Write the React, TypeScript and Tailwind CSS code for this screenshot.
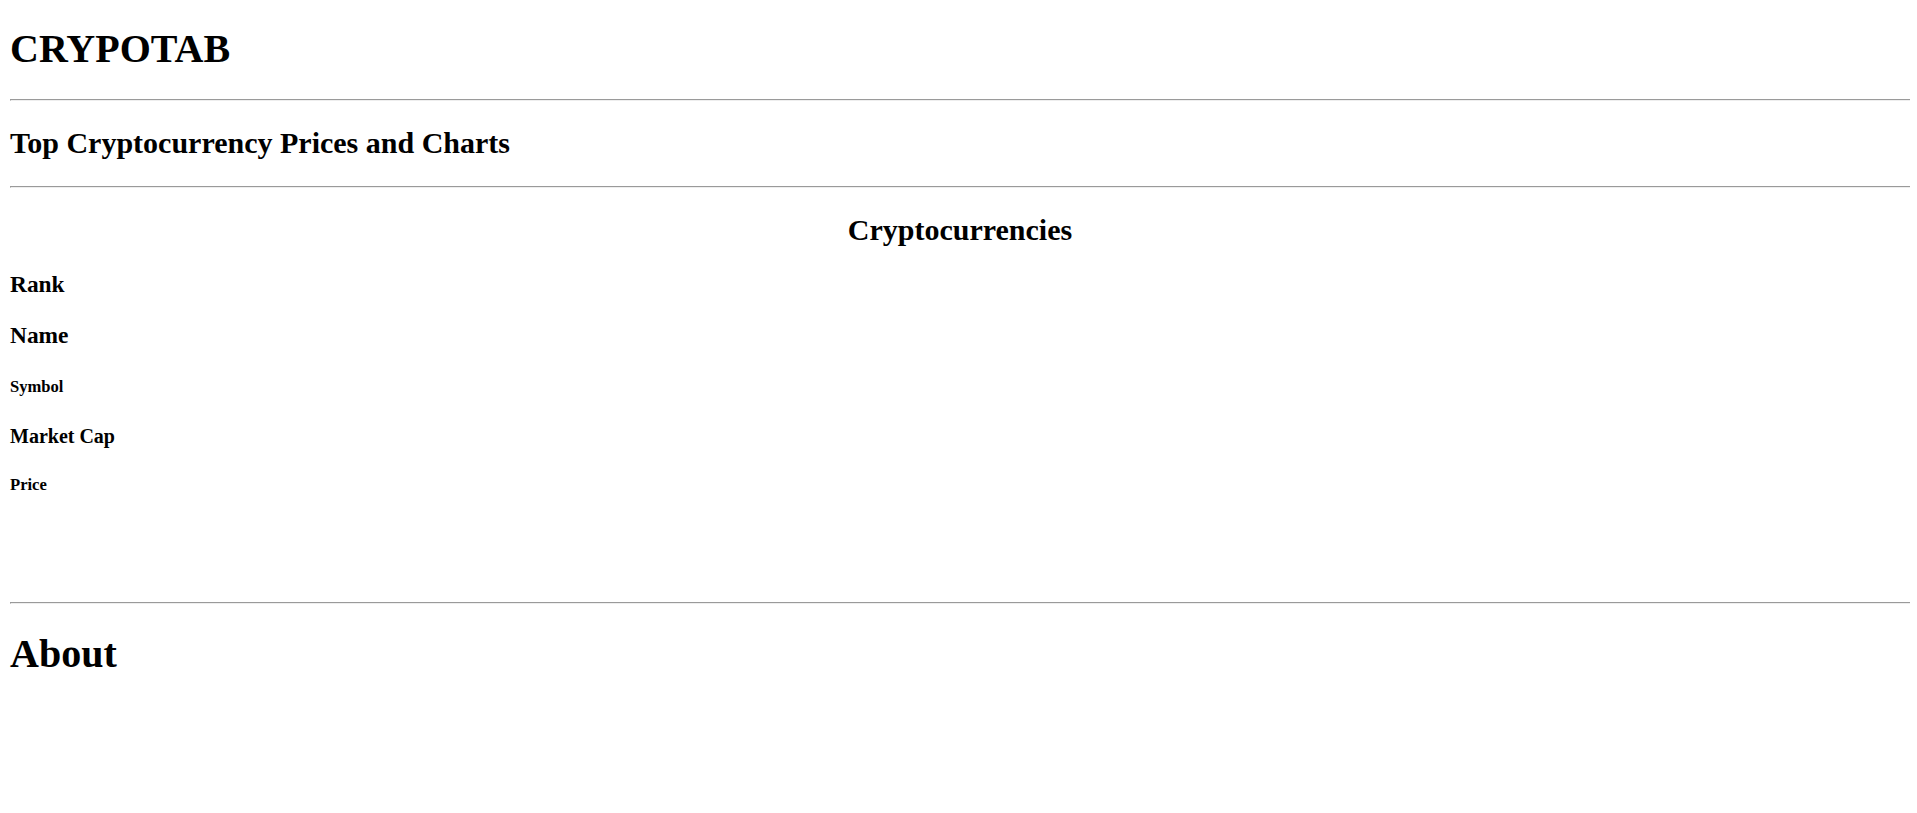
const serif = "font-['Liberation_Serif','Times_New_Roman',serif]";

function Rule({ className = "" }: { className?: string }) {
  return (
    <hr
      className={`h-[2px] border-0 border-t border-b border-l border-t-[#9a9a9a] border-l-[#9a9a9a] border-b-[#eeeeee] ${className}`}
    />
  );
}

const columns = [
  { label: "Rank", cls: "mt-[24px] text-[23.4px] leading-[27px]" },
  { label: "Name", cls: "mt-[24px] text-[23.4px] leading-[27px]" },
  { label: "Symbol", cls: "mt-[28px] text-[16.6px] leading-[19px]" },
  { label: "Market Cap", cls: "mt-[29px] text-[20px] leading-[23px]" },
  { label: "Price", cls: "mt-[27px] text-[16.6px] leading-[19px]" },
];

export default function App() {
  return (
    <div className={`min-h-[813px] bg-white pl-[10px] pr-[7px] pt-[26px] text-black ${serif}`}>
      <header>
        <h1 className="text-[40px] font-bold leading-[46px]">CRYPOTAB</h1>
        <Rule className="mt-[27px]" />
        <h2 className="mt-[24px] text-[30px] font-bold leading-[35px]">
          Top Cryptocurrency Prices and Charts
        </h2>
        <Rule className="mt-[26px]" />
      </header>

      <section>
        <h2 className="mt-[24px] text-center text-[30px] font-bold leading-[35px]">
          Cryptocurrencies
        </h2>
        {columns.map((c) => (
          <div key={c.label} className={`font-bold ${c.cls}`}>
            {c.label}
          </div>
        ))}
      </section>

      <Rule className="mt-[108px]" />
      <h1 className="mt-[27px] text-[40px] font-bold leading-[46px]">About</h1>
    </div>
  );
}
